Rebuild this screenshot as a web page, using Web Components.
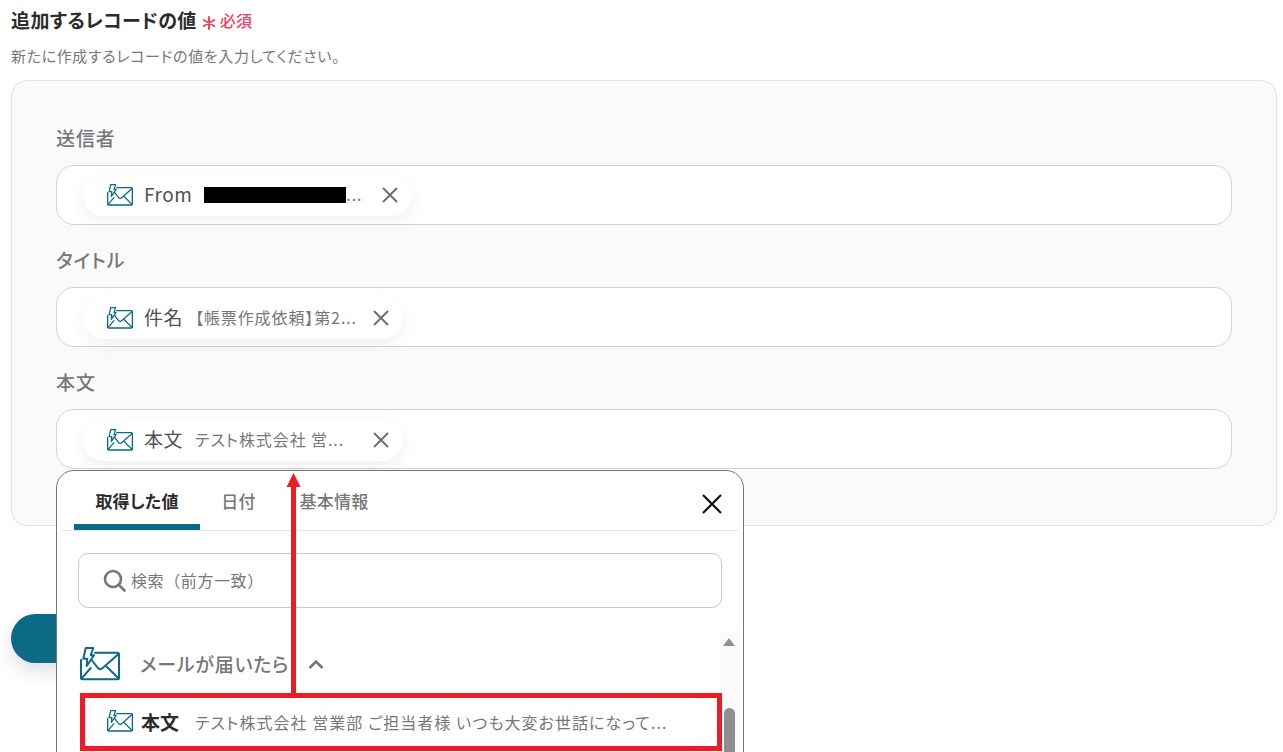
<!DOCTYPE html>
<html lang="ja">
<head>
<meta charset="utf-8">
<title>追加するレコードの値</title>
<style>
    html, body { margin: 0; padding: 0; background: #fff; }
    body { font-family: "Noto Sans CJK JP", "Noto Sans", sans-serif; font-feature-settings: "palt"; overflow: hidden; }
</style>
</head>
<body>
<record-page>
    <record-field label="送信者" style="--chip-top: 8px">
        <value-chip name="From" redact width="329">...</value-chip>
    </record-field>
    <record-field label="タイトル">
        <value-chip name="件名" width="320">【帳票作成依頼】第2...</value-chip>
    </record-field>
    <record-field label="本文">
        <value-chip name="本文" width="320">テスト株式会社 営...</value-chip>
    </record-field>
</record-page>

<script>
const MAIL_SVG = `
    <svg viewBox="0 0 40 34" width="100%" height="100%" fill="none" stroke="#0b6a85" stroke-width="2" stroke-linejoin="round" stroke-linecap="round">
        <path d="M15 5.7H37.5Q39 5.7 39 7.2V30.8Q39 32.3 37.5 32.3H2.5Q1 32.3 1 30.8V13"/>
        <path d="M11.7 13L17.5 20.5Q20 23.5 23 20.7L38.5 7"/>
        <path d="M1.7 31.3L10.7 21M38.5 31.3L26.7 19.7"/>
        <path d="M5.7 1H13.3L10.7 8.3H14L6.7 19L7.3 11.7H3.3Z"/>
    </svg>`;

class MailIcon extends HTMLElement {
    constructor() {
        super();
        this.attachShadow({ mode: 'open' });
        const size = this.getAttribute('size') || 26;
        this.shadowRoot.innerHTML = `
            <style>
                :host { display: block; flex: none; width: ${size}px; height: ${size * 0.85}px; }
                svg { display: block; }
            </style>
            ${MAIL_SVG}
        `;
    }
}
customElements.define('mail-icon', MailIcon);

class ValueChip extends HTMLElement {
    constructor() {
        super();
        this.attachShadow({ mode: 'open' });
        const redact = this.hasAttribute('redact');
        this.shadowRoot.innerHTML = `
            <style>
                :host {
                    display: flex;
                    align-items: center;
                    box-sizing: border-box;
                    width: ${this.getAttribute('width')}px;
                    height: 42px;
                    padding: 0 13px 0 24px;
                    background: #fff;
                    border-radius: 21px;
                    box-shadow: 0 6px 16px rgba(40, 50, 70, 0.07);
                }
                #name { margin: 0 0 4px 11px; font-size: 19px; color: #505055; white-space: nowrap; letter-spacing: .5px; }
                #value { margin: 0 0 3px 12px; font-size: 16px; color: #77777a; white-space: nowrap; flex: 1; display: flex; align-items: center; letter-spacing: .9px; }
                #mask { display: ${redact ? 'block' : 'none'}; width: 142px; height: 16px; background: #000; margin-top: 3px; }
                svg.close { flex: none; display: block; }
            </style>
            <mail-icon size="26"></mail-icon>
            <span id="name">${this.getAttribute('name')}</span>
            <span id="value"><span id="mask"></span><slot></slot></span>
            <svg class="close" width="18" height="18" viewBox="0 0 18 18" stroke="#6f6f72" stroke-width="2"><path d="M2 2L16 16M16 2L2 16"/></svg>
        `;
    }
}
customElements.define('value-chip', ValueChip);

class RecordField extends HTMLElement {
    constructor() {
        super();
        this.attachShadow({ mode: 'open' });
        this.shadowRoot.innerHTML = `
            <style>
                :host { display: block; }
                label { display: block; height: 26px; line-height: 26px; font-size: 19px; font-weight: 500; color: #77777a; margin-bottom: 14px; letter-spacing: .9px; }
                #box {
                    box-sizing: border-box;
                    height: 60px;
                    padding: var(--chip-top, 9px) 26px 0;
                    background: #fff;
                    border: 1px solid #cfd3dc;
                    border-radius: 18px;
                }
            </style>
            <label>${this.getAttribute('label')}</label>
            <div id="box"><slot></slot></div>
        `;
    }
}
customElements.define('record-field', RecordField);

class PickerPopup extends HTMLElement {
    constructor() {
        super();
        this.attachShadow({ mode: 'open' });
        this.shadowRoot.innerHTML = `
            <style>
                :host {
                    position: absolute;
                    left: 56px;
                    top: 470px;
                    width: 688px;
                    height: 330px;
                    box-sizing: border-box;
                    display: block;
                    background: #fff;
                    border: 1.5px solid #77777a;
                    border-radius: 18px;
                }
                #tabs {
                    display: flex;
                    align-items: flex-start;
                    height: 59px;
                    margin: 0 5px;
                    padding-left: 12px;
                    border-bottom: 1px solid #e6e6e8;
                    position: relative;
                }
                .tab {
                    box-sizing: border-box;
                    height: 59px;
                    padding-top: 18px;
                    line-height: 24px;
                    font-size: 17px;
                    font-weight: 500;
                    color: #77777a;
                    text-align: center;
                    letter-spacing: .2px;
                }
                .tab.on {
                    width: 126px;
                    color: #2c2c2e;
                    font-weight: 700;
                    border-bottom: 6px solid #0b6a85;
                    border-radius: 6px 6px 0 0;
                }
                .tab.date { width: 77px; }
                .tab.info { width: 114px; }
                #close { position: absolute; right: 15px; top: 22px; display: block; }
                #search {
                    box-sizing: border-box;
                    display: flex;
                    align-items: center;
                    gap: 5px;
                    height: 55px;
                    margin: 22px 21px 0;
                    padding: 0 0 2px 24px;
                    border: 1px solid #c8c8ca;
                    border-radius: 10px;
                    font-size: 16px;
                    color: #77777a;
                    font-feature-settings: normal;
                    letter-spacing: .6px;
                }
                #search svg { margin-top: 2px; }
                #group {
                    display: flex;
                    align-items: center;
                    height: 42px;
                    margin: 35px 0 0 23px;
                    font-size: 19px;
                    font-weight: 500;
                    color: #77777a;
                    letter-spacing: .75px;
                }
                #group span { margin: 0 0 2px 20px; }
                #group svg { margin-left: 19px; }
                #row {
                    box-sizing: border-box;
                    display: flex;
                    align-items: center;
                    width: 630px;
                    height: 47px;
                    margin: 13px 0 0 29px;
                    padding-left: 21px;
                    background: #fff;
                    border-radius: 23px;
                    box-shadow: 0 0 8px rgba(40, 50, 70, 0.08);
                    font-size: 16px;
                    color: #77777a;
                    white-space: nowrap;
                    letter-spacing: 1.05px;
                }
                #row b { margin: 0 16px 0 8px; font-size: 19px; font-weight: 700; color: #2c2c2e; letter-spacing: 0; }
                #track {
                    position: absolute;
                    right: 5px;
                    top: 160px;
                    bottom: 0;
                    width: 18px;
                    background: #fafafa;
                }
                #track i {
                    position: absolute;
                    left: 3px;
                    top: 7px;
                    border: 6.5px solid transparent;
                    border-top: 0;
                    border-bottom: 8px solid #8f8f8f;
                }
                #track u { position: absolute; left: 4px; top: 77px; width: 11px; height: 120px; background: #8f8f8f; border-radius: 6px; }
            </style>
            <div id="tabs">
                <div class="tab on">取得した値</div>
                <div class="tab date">日付</div>
                <div class="tab info">基本情報</div>
                <svg id="close" width="22" height="22" viewBox="0 0 22 22" stroke="#111" stroke-width="2.2"><path d="M2 2L20 20M20 2L2 20"/></svg>
            </div>
            <div id="search">
                <svg width="23" height="23" viewBox="0 0 23 23" fill="none" stroke="#77777a" stroke-width="2.6" stroke-linecap="round"><circle cx="10" cy="10" r="8"/><path d="M16 16L21.5 21.5"/></svg>
                <span>検索（前方一致）</span>
            </div>
            <div id="group">
                <mail-icon size="40"></mail-icon>
                <span>メールが届いたら</span>
                <svg width="16" height="10" viewBox="0 0 16 10" fill="none" stroke="#77777a" stroke-width="2.6"><path d="M1.5 9L8 2.5L14.5 9"/></svg>
            </div>
            <div id="row">
                <mail-icon size="26"></mail-icon>
                <b>本文</b>
                <span>テスト株式会社 営業部 ご担当者様 いつも大変お世話になって...</span>
            </div>
            <div id="track"><i></i><u></u></div>
        `;
    }
}
customElements.define('picker-popup', PickerPopup);

class RecordPage extends HTMLElement {
    constructor() {
        super();
        this.attachShadow({ mode: 'open' });
        this.shadowRoot.innerHTML = `
            <style>
                :host {
                    display: block;
                    position: relative;
                    height: 752px;
                    overflow: hidden;
                    padding: 6px 6px 0 11px;
                    box-sizing: border-box;
                }
                h2 { display: flex; align-items: center; margin: 0; height: 26px; font-size: 19px; font-weight: 700; color: #2c2c2e; letter-spacing: .4px; }
                #star { margin: 7px 4px 0 5px; display: block; }
                #req { font-size: 16px; font-weight: 500; color: #f2405f; margin-top: 2px; }
                p { margin: 11px 0 0; height: 26px; line-height: 26px; font-size: 15px; color: #77777a; letter-spacing: .65px; }
                #panel {
                    box-sizing: border-box;
                    display: flex;
                    flex-direction: column;
                    gap: 22px;
                    height: 446px;
                    margin-top: 11px;
                    padding: 44px 44px 0;
                    background: #fafafb;
                    border: 1px solid #e0e2e8;
                    border-radius: 16px;
                }
                #cta {
                    width: 200px;
                    height: 49px;
                    margin-top: 88px;
                    background: #0b6a85;
                    border-radius: 25px;
                    box-shadow: 0 8px 18px rgba(40, 50, 70, 0.15);
                }
                /* annotations drawn over the popup */
                #arrow { position: absolute; left: 286px; top: 473px; display: block; }
                #mark {
                    position: absolute;
                    left: 80px;
                    top: 693px;
                    width: 642px;
                    height: 58px;
                    box-sizing: border-box;
                    border: 5px solid #ec1c24;
                }
            </style>
            <h2>追加するレコードの値
                <svg id="star" width="14" height="14" viewBox="0 0 14 14" stroke="#f2405f" stroke-width="2" stroke-linecap="round"><path d="M7 1V13M1.8 4L12.2 10M12.2 4L1.8 10"/></svg>
                <span id="req">必須</span>
            </h2>
            <p>新たに作成するレコードの値を入力してください。</p>
            <div id="panel"><slot></slot></div>
            <div id="cta"></div>
            <picker-popup></picker-popup>
            <svg id="arrow" width="15" height="222" viewBox="0 0 15 222"><path d="M7.5 0L14.5 14H10V222H5V14H0.5Z" fill="#ec1c24"/></svg>
            <div id="mark"></div>
        `;
    }
}
customElements.define('record-page', RecordPage);
</script>
</body>
</html>
